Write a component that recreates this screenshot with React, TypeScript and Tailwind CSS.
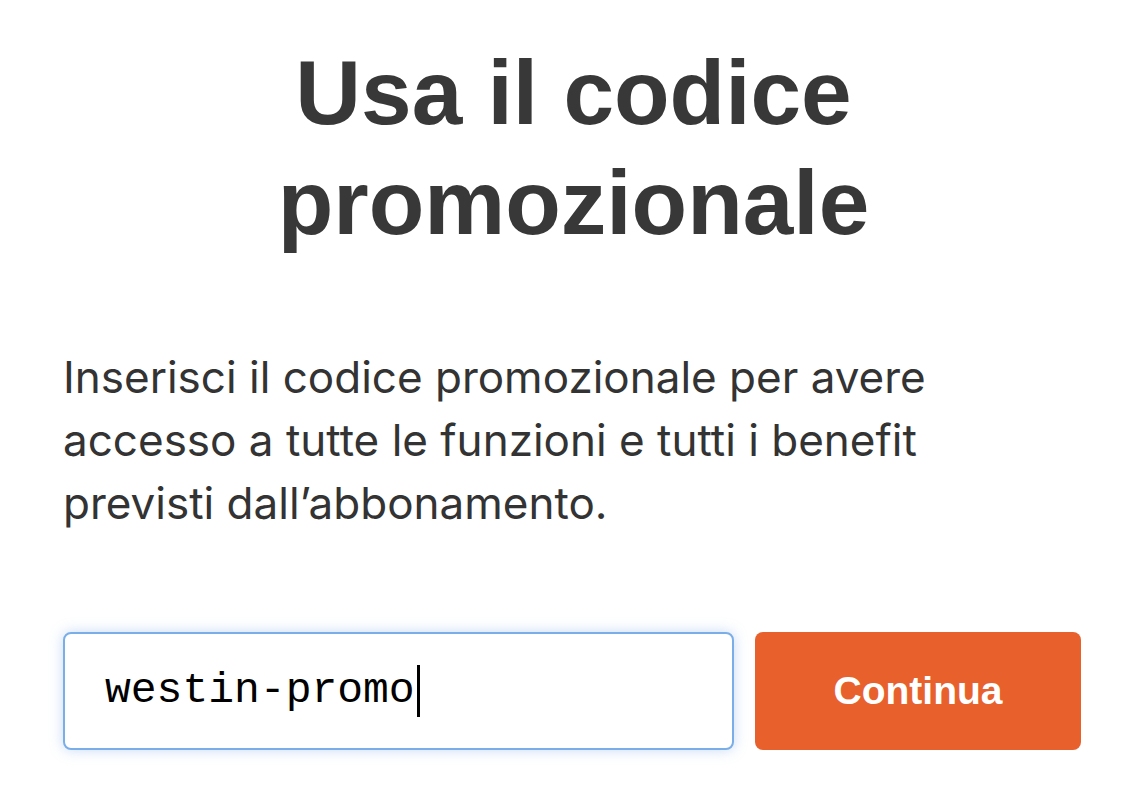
export default function App() {
  return (
    <div className="min-h-screen bg-white px-[63px] pt-[38px]">
      <h1 className="mx-auto text-center font-['Liberation_Sans',Arial,sans-serif] text-[91px] font-bold leading-[110px] text-[#383838]">
        Usa il codice
        <br />
        promozionale
      </h1>

      <p className="mt-[88px] max-w-[900px] font-['Inter',sans-serif] text-[44px] leading-[63px] text-[#333333]">
        Inserisci il codice promozionale per avere accesso a tutte le funzioni e tutti i benefit previsti dall’abbonamento.
      </p>

      <div className="mt-[97px] flex gap-[21px] pr-[3px]">
        <div className="flex h-[118px] flex-1 items-center rounded-lg border-2 border-[#7aaee8] bg-white pl-[40px] shadow-[0_0_14px_rgba(96,150,230,0.35)]">
          <span className="font-['Liberation_Mono',monospace] text-[43px] text-black">westin-promo</span>
          <span className="ml-[2px] h-[52px] w-[3px] bg-black" />
        </div>
        <button className="h-[118px] w-[326px] rounded-lg bg-[#e8602c] font-['Liberation_Sans',Arial,sans-serif] text-[39px] font-bold text-white">
          Continua
        </button>
      </div>
    </div>
  );
}
